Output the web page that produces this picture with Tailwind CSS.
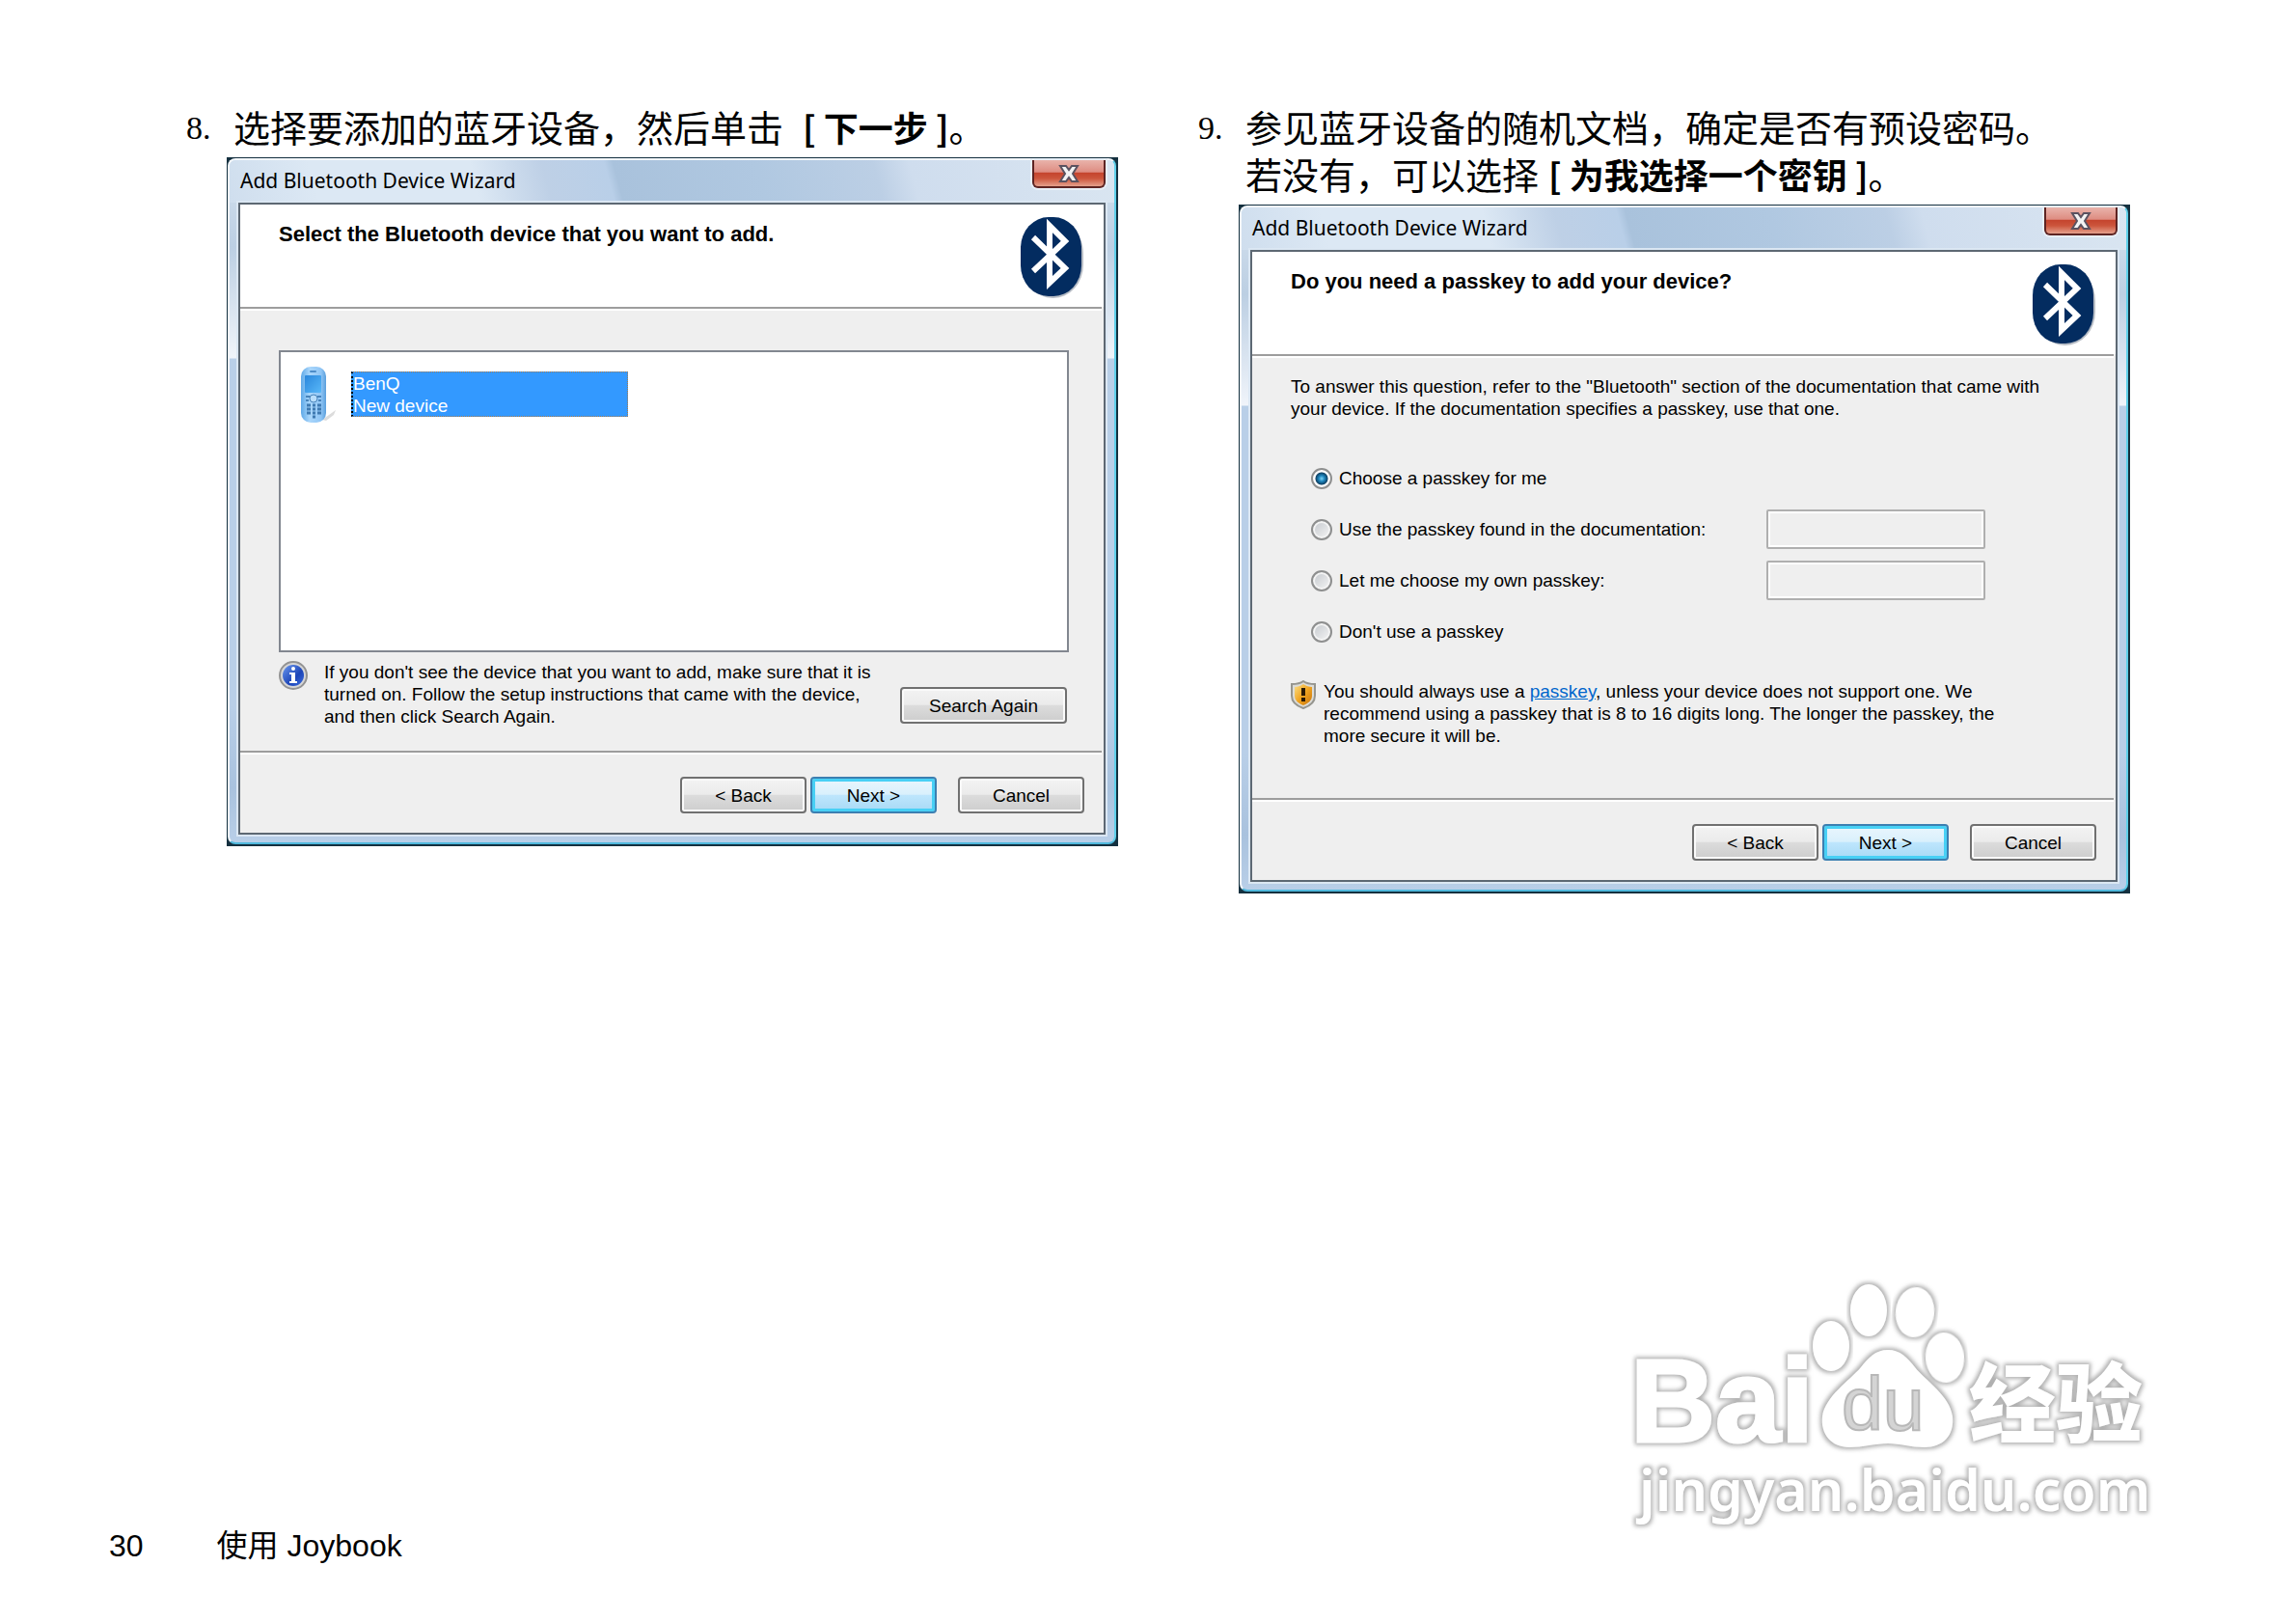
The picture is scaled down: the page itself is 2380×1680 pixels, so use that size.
<!DOCTYPE html>
<html lang="zh-CN">
  <head>
    <meta charset="UTF-8" />
    <meta name="viewport" content="width=device-width, initial-scale=1.0" />
    <title>使用 Joybook</title>
    <script src="https://cdn.jsdelivr.net/npm/@tailwindcss/browser@4"></script>
  </head>
  <body class="bg-white text-black min-h-screen flex flex-col justify-between">
    <svg class="hidden" aria-hidden="true">
      <symbol id="bluetooth" viewBox="0 0 66 85">
        <rect x="2" y="3" width="63" height="81" rx="31" ry="35" fill="#8a93a0" opacity=".6" />
        <rect x="0" y="0" width="63" height="82" rx="29" ry="32" fill="#032c60" />
        <path d="M13 21 46 53 30 68V9L46 25 13 56" fill="none" stroke="#fff" stroke-width="6" stroke-miterlimit="8" />
      </symbol>
      <symbol id="close" viewBox="0 0 22 18">
        <path d="M2 1h6l3 4 3-4h6l-5 8 5 8h-6l-3-4-3 4H2l5-8z" fill="#f3f3f3" stroke="#5b5260" stroke-width="2" />
      </symbol>
    </svg>

    <main
      class="grid grid-cols-2 gap-x-[83px] items-start pt-[106px] pl-[193px] pr-[172px] font-['Noto_Sans_CJK_SC',sans-serif]"
    >
      <!-- step 8 -->
      <section>
        <div class="flex items-start text-[38px] leading-[49px]">
          <span class="h-[49px] w-[49px] pt-[2px] font-['Liberation_Serif',serif] text-[34px]">8.</span>
          <p>
            选择要添加的蓝牙设备，然后单击<strong class="ml-5 text-[36px] font-bold">[ 下一步 ]</strong>。
          </p>
        </div>
        <div
          class="ml-[42px] mt-[7px] bg-[#14303f] pt-px pl-px pr-[2px] pb-[2px] font-['Liberation_Sans',sans-serif] text-[19px] leading-[23px]"
        >
          <div
            class="rounded-lg border-2 border-t-[#f4f8fc] border-l-[#f4f8fc] border-r-[#5fd0ea] border-b-[#4fb8dc] bg-[linear-gradient(180deg,#d5e2ef_0,#bccfe3_90px,#f0f4fa_205px,#b9cfe8_206px,#b9cfe8_80%,#a9c2de_92%,#b9cfe8_100%)]"
          >
            <div
              class="flex items-start justify-between h-11 pl-[11px] pr-[9px] rounded-t-md bg-[linear-gradient(75deg,#cfdeee_0%,#dce8f4_10%,#dce8f4_28%,#bed0e6_36%,#b9cfe8_43%,#a9c2dc_44%,#b0c8e1_60%,#bccfe5_73%,#cfddee_77%,#d9e5f1_100%)]"
            >
              <h2 class="pt-[7px] font-['Noto_Sans',sans-serif] text-[21px] leading-7">
                Add Bluetooth Device Wizard
              </h2>
              <button
                aria-label="Close"
                class="flex h-[29px] w-[76px] items-center justify-center rounded-b-md border-2 border-t-0 border-[#5e2422] bg-[linear-gradient(180deg,#e9b3ab_0%,#de8d82_45%,#c5452e_50%,#cc553c_70%,#e5a08c_100%)] shadow-[0_0_0_2px_#e8eff7]"
              >
                <svg class="w-[22px] h-[18px]"><use href="#close" /></svg>
              </button>
            </div>
            <div
              class="ml-[9px] mr-[9px] mb-[8px] border-2 border-[#5d6873] bg-[#efefef] shadow-[0_0_0_2px_#dbe7f3]"
            >
              <div class="flex h-[106px] items-start justify-between bg-white pl-10 pr-[20px] pt-[13px]">
                <h3 class="pt-[6px] font-bold text-[22px]">Select the Bluetooth device that you want to add.</h3>
                <svg class="w-[66px] h-[85px]"><use href="#bluetooth" /></svg>
              </div>
              <div class="h-1 border-t-2 border-[#9d9d9d] bg-white mr-[2px]"></div>

              <div class="flex min-h-[456px] flex-col pt-[41px] pl-10 pr-9 pb-6">
                <ul class="flex-1 border-2 border-[#828790] bg-white pt-[14px] pl-[21px]">
                  <li class="flex">
                    <svg class="w-[36px] h-[60px] mr-[16px]" viewBox="0 0 36 60">
                      <defs>
                        <linearGradient id="phoneBody" x1="0" x2="1">
                          <stop offset="0" stop-color="#5fa9e8" />
                          <stop offset=".35" stop-color="#a9d6fb" />
                          <stop offset=".8" stop-color="#8fc5f5" />
                          <stop offset="1" stop-color="#5a9fdc" />
                        </linearGradient>
                        <linearGradient id="phoneScreen" x1="0" y1="0" x2="1" y2="1">
                          <stop offset="0" stop-color="#2a86dc" />
                          <stop offset="1" stop-color="#58b8f8" />
                        </linearGradient>
                      </defs>
                      <path d="M22 56 36 46 34 51 26 57z" fill="#dcdcdc" />
                      <rect x="0" y="1" width="26" height="58" rx="10" fill="url(#phoneBody)" />
                      <rect x="9" y="5" width="7" height="2" rx="1" fill="#4d8cc8" />
                      <rect x="4" y="10" width="17" height="18" rx="1" fill="url(#phoneScreen)" />
                      <path d="M5 32h5M17 32h4M5 36h3M18 36h3" stroke="#4884bb" stroke-width="2" />
                      <circle cx="13" cy="34" r="4" fill="#b9defb" stroke="#4884bb" stroke-width="1" />
                      <path
                        d="M6 41h4M12 41h3M17 41h4M6 45h4M12 45h3M17 45h4M6 49h4M12 49h3M17 49h4M12 53h3"
                        stroke="#3f7ab2"
                        stroke-width="3"
                      />
                    </svg>
                    <div
                      class="mt-[6px] h-[47px] w-[287px] border border-dotted border-[#a87b4a] border-l-2 border-l-black bg-[#3399ff] text-white"
                    >
                      BenQ<br />New device
                    </div>
                  </li>
                </ul>
                <div class="mt-[9px] flex items-start">
                  <svg class="w-[30px] h-[30px] mr-[17px] shrink-0" viewBox="0 0 30 30">
                    <defs>
                      <linearGradient id="infoBlue" x1="0" y1="0" x2="1" y2="1">
                        <stop offset="0" stop-color="#6d9af0" />
                        <stop offset=".6" stop-color="#1c45b8" />
                        <stop offset="1" stop-color="#3d6ee0" />
                      </linearGradient>
                    </defs>
                    <circle cx="15" cy="15" r="14" fill="#d6d6d6" stroke="#939393" stroke-width="2" />
                    <circle cx="15" cy="15" r="11" fill="url(#infoBlue)" />
                    <circle cx="15" cy="8" r="2" fill="#fff" />
                    <path d="M11 12h6v9h2v2h-8v-2h2v-7h-2z" fill="#fff" />
                  </svg>
                  <p>
                    If you don't see the device that you want to add, make sure that it is<br />
                    turned on. Follow the setup instructions that came with the device,<br />
                    and then click Search Again.
                  </p>
                  <button
                    class="ml-auto mr-[2px] mt-[27px] h-[38px] w-[173px] shrink-0 rounded border-2 border-[#707070] bg-[linear-gradient(180deg,#f3f3f3_0%,#ebebeb_48%,#dcdcdc_50%,#cdcdcd_100%)] shadow-[inset_0_0_0_2px_#fafafa]"
                  >
                    Search Again
                  </button>
                </div>
              </div>

              <div class="h-1 border-t-2 border-[#9d9d9d] bg-white mr-[2px]"></div>
              <div class="flex h-[81px] items-start justify-end pt-[23px] pr-5">
                <button
                  class="h-[38px] w-[131px] rounded border-2 border-[#707070] bg-[linear-gradient(180deg,#f3f3f3_0%,#ebebeb_48%,#dcdcdc_50%,#cdcdcd_100%)] shadow-[inset_0_0_0_2px_#fafafa]"
                >
                  &lt; Back
                </button>
                <button
                  class="ml-1 h-[38px] w-[131px] rounded border-2 border-[#3c7fb1] bg-[linear-gradient(180deg,#eaf6fd_0%,#d9f0fc_48%,#bee6fd_50%,#a7d9f5_100%)] shadow-[inset_0_0_0_3px_#48d0f5]"
                >
                  Next &gt;
                </button>
                <button
                  class="ml-[22px] h-[38px] w-[131px] rounded border-2 border-[#707070] bg-[linear-gradient(180deg,#f3f3f3_0%,#ebebeb_48%,#dcdcdc_50%,#cdcdcd_100%)] shadow-[inset_0_0_0_2px_#fafafa]"
                >
                  Cancel
                </button>
              </div>
            </div>
          </div>
        </div>
      </section>

      <!-- step 9 -->
      <section>
        <div class="flex items-start text-[38px] leading-[49px]">
          <span class="h-[49px] w-[49px] pt-[2px] font-['Liberation_Serif',serif] text-[34px]">9.</span>
          <p>
            参见蓝牙设备的随机文档，确定是否有预设密码。<br />
            若没有，可以选择<strong class="ml-[10px] text-[36px] font-bold">[ 为我选择一个密钥 ]</strong>。
          </p>
        </div>
        <div
          class="ml-[42px] mt-[7px] bg-[#14303f] pt-px pl-px pr-[2px] pb-[2px] font-['Liberation_Sans',sans-serif] text-[19px] leading-[23px]"
        >
          <div
            class="rounded-lg border-2 border-t-[#f4f8fc] border-l-[#f4f8fc] border-r-[#5fd0ea] border-b-[#4fb8dc] bg-[linear-gradient(180deg,#d5e2ef_0,#bccfe3_90px,#f0f4fa_205px,#b9cfe8_206px,#b9cfe8_80%,#a9c2de_92%,#b9cfe8_100%)]"
          >
            <div
              class="flex items-start justify-between h-11 pl-[11px] pr-[9px] rounded-t-md bg-[linear-gradient(75deg,#cfdeee_0%,#dce8f4_10%,#dce8f4_28%,#bed0e6_36%,#b9cfe8_43%,#a9c2dc_44%,#b0c8e1_60%,#bccfe5_73%,#cfddee_77%,#d9e5f1_100%)]"
            >
              <h2 class="pt-[7px] font-['Noto_Sans',sans-serif] text-[21px] leading-7">
                Add Bluetooth Device Wizard
              </h2>
              <button
                aria-label="Close"
                class="flex h-[29px] w-[76px] items-center justify-center rounded-b-md border-2 border-t-0 border-[#5e2422] bg-[linear-gradient(180deg,#e9b3ab_0%,#de8d82_45%,#c5452e_50%,#cc553c_70%,#e5a08c_100%)] shadow-[0_0_0_2px_#e8eff7]"
              >
                <svg class="w-[22px] h-[18px]"><use href="#close" /></svg>
              </button>
            </div>
            <div
              class="ml-[9px] mr-[9px] mb-[8px] border-2 border-[#5d6873] bg-[#efefef] shadow-[0_0_0_2px_#dbe7f3]"
            >
              <div class="flex h-[106px] items-start justify-between bg-white pl-10 pr-[20px] pt-[13px]">
                <h3 class="pt-[6px] font-bold text-[22px]">Do you need a passkey to add your device?</h3>
                <svg class="w-[66px] h-[85px]"><use href="#bluetooth" /></svg>
              </div>
              <div class="h-1 border-t-2 border-[#9d9d9d] bg-white mr-[2px]"></div>

              <form class="flex min-h-[456px] flex-col pt-[18px] pl-10 pr-9">
                <p>
                  To answer this question, refer to the "Bluetooth" section of the documentation that came with<br />
                  your device. If the documentation specifies a passkey, use that one.
                </p>
                <div class="mt-[34px] pl-[21px] pr-[49px]">
                  <div class="flex h-[53px] items-center gap-[7px]">
                    <input
                      type="radio"
                      name="passkey"
                      id="pkAuto"
                      checked
                      class="h-[22px] w-[22px] appearance-none rounded-full border-2 border-[#8e8f8f] bg-[radial-gradient(circle_at_9px_9px,#7fd3f5_0,#1f86bd_3px,#0e4368_6px,transparent_7px)] shadow-[inset_0_0_0_2px_#fff]"
                    />
                    <label for="pkAuto">Choose a passkey for me</label>
                  </div>
                  <div class="flex h-[53px] items-center gap-[7px]">
                    <input
                      type="radio"
                      name="passkey"
                      id="pkDoc"
                      class="h-[22px] w-[22px] appearance-none rounded-full border-2 border-[#8e8f8f] bg-[linear-gradient(135deg,#c3c7cc,#f6f6f6)] shadow-[inset_0_0_0_2px_#f4f4f4]"
                    />
                    <label for="pkDoc">Use the passkey found in the documentation:</label>
                    <input
                      type="text"
                      aria-label="Passkey found in the documentation"
                      disabled
                      class="ml-auto mr-[50px] h-[41px] w-[227px] rounded-xs border-2 border-[#afafaf] px-2 shadow-[inset_0_0_0_2px_#fff]"
                    />
                  </div>
                  <div class="flex h-[53px] items-center gap-[7px]">
                    <input
                      type="radio"
                      name="passkey"
                      id="pkOwn"
                      class="h-[22px] w-[22px] appearance-none rounded-full border-2 border-[#8e8f8f] bg-[linear-gradient(135deg,#c3c7cc,#f6f6f6)] shadow-[inset_0_0_0_2px_#f4f4f4]"
                    />
                    <label for="pkOwn">Let me choose my own passkey:</label>
                    <input
                      type="text"
                      aria-label="My own passkey"
                      disabled
                      class="ml-auto mr-[50px] h-[41px] w-[227px] rounded-xs border-2 border-[#afafaf] px-2 shadow-[inset_0_0_0_2px_#fff]"
                    />
                  </div>
                  <div class="flex h-[53px] items-center gap-[7px]">
                    <input
                      type="radio"
                      name="passkey"
                      id="pkNone"
                      class="h-[22px] w-[22px] appearance-none rounded-full border-2 border-[#8e8f8f] bg-[linear-gradient(135deg,#c3c7cc,#f6f6f6)] shadow-[inset_0_0_0_2px_#f4f4f4]"
                    />
                    <label for="pkNone">Don't use a passkey</label>
                  </div>
                </div>
                <div class="mt-6 flex items-start gap-2">
                  <svg class="w-[26px] h-[30px] shrink-0" viewBox="0 0 26 30">
                    <defs>
                      <linearGradient id="shieldGold" x1="0" y1="0" x2="1" y2="1">
                        <stop offset="0" stop-color="#fbe08a" />
                        <stop offset=".5" stop-color="#f0a420" />
                        <stop offset="1" stop-color="#c8740c" />
                      </linearGradient>
                    </defs>
                    <path
                      d="M13 1c4 3 8 3 12 3v12c0 7-6 11-12 13C7 27 1 23 1 16V4c4 0 8 0 12-3z"
                      fill="#dcdcd8"
                      stroke="#95958f"
                      stroke-width="2"
                    />
                    <path d="M13 4c3 2 6 3 9 3v9c0 5-4 8-9 10-5-2-9-5-9-10V7c3 0 6-1 9-3z" fill="url(#shieldGold)" />
                    <path d="M11 8h4v8h-4zM11 18h4v4h-4z" fill="#2b1a05" />
                  </svg>
                  <p>
                    You should always use a
                    <a href="#" class="text-[#0066cc] underline">passkey</a>, unless your device does not support one. We<br />
                    recommend using a passkey that is 8 to 16 digits long. The longer the passkey, the<br />
                    more secure it will be.
                  </p>
                </div>
              </form>

              <div class="h-1 border-t-2 border-[#9d9d9d] bg-white mr-[2px]"></div>
              <div class="flex h-[81px] items-start justify-end pt-[23px] pr-5">
                <button
                  class="h-[38px] w-[131px] rounded border-2 border-[#707070] bg-[linear-gradient(180deg,#f3f3f3_0%,#ebebeb_48%,#dcdcdc_50%,#cdcdcd_100%)] shadow-[inset_0_0_0_2px_#fafafa]"
                >
                  &lt; Back
                </button>
                <button
                  class="ml-1 h-[38px] w-[131px] rounded border-2 border-[#3c7fb1] bg-[linear-gradient(180deg,#eaf6fd_0%,#d9f0fc_48%,#bee6fd_50%,#a7d9f5_100%)] shadow-[inset_0_0_0_3px_#48d0f5]"
                >
                  Next &gt;
                </button>
                <button
                  class="ml-[22px] h-[38px] w-[131px] rounded border-2 border-[#707070] bg-[linear-gradient(180deg,#f3f3f3_0%,#ebebeb_48%,#dcdcdc_50%,#cdcdcd_100%)] shadow-[inset_0_0_0_2px_#fafafa]"
                >
                  Cancel
                </button>
              </div>
            </div>
          </div>
        </div>
      </section>
    </main>

    <footer
      class="flex items-end justify-between pl-[113px] pr-[140px] pb-[60px] font-['Liberation_Sans','Noto_Sans_CJK_SC',sans-serif] text-[32px] leading-[36px]"
    >
      <div class="flex items-baseline gap-[76px]">
        <span>30</span>
        <span>使用 Joybook</span>
      </div>
      <svg class="mb-[30px] w-[550px] h-[270px]" viewBox="0 0 550 270">
        <defs>
          <filter id="halo" x="-10%" y="-10%" width="120%" height="120%">
            <feMorphology in="SourceAlpha" operator="dilate" radius="2" result="d" />
            <feGaussianBlur in="d" stdDeviation="2" result="b" />
            <feFlood flood-color="#b0b0b0" />
            <feComposite in2="b" operator="in" result="g" />
            <feMerge>
              <feMergeNode in="g" />
              <feMergeNode in="SourceGraphic" />
            </feMerge>
          </filter>
        </defs>
        <g fill="#fff">
          <text
            x="0"
            y="174"
            font-family="Liberation Sans"
            font-weight="700"
            font-size="122"
            stroke="#fff"
            stroke-width="3"
            filter="url(#halo)"
          >Bai</text>
          <ellipse cx="208" cy="75" rx="19" ry="26" filter="url(#halo)" />
          <ellipse cx="247" cy="38" rx="19" ry="27" filter="url(#halo)" />
          <ellipse cx="295" cy="40" rx="20" ry="26" transform="rotate(6 295 40)" filter="url(#halo)" />
          <ellipse cx="326" cy="87" rx="20" ry="26" transform="rotate(-4 326 87)" filter="url(#halo)" />
          <path
            d="M267 79c13 0 20 8 28 18 11 14 36 29 39 51 2 20-10 32-29 32-15 0-25-4-38-4s-26 4-40 4c-19 0-30-14-28-32 3-21 28-37 40-51 8-10 15-18 28-18z"
            filter="url(#halo)"
          />
          <text x="351" y="168" font-family="Noto Sans CJK SC" font-weight="900" font-size="90" filter="url(#halo)">经验</text>
          <text x="9" y="246" font-family="Noto Sans" font-weight="600" font-size="59" filter="url(#halo)">jingyan.baidu.com</text>
        </g>
        <text x="219" y="162" font-family="Liberation Sans" font-size="77" fill="#d4d4d4" stroke="#b8b8b8" stroke-width="2">du</text>
      </svg>
    </footer>
  </body>
</html>
